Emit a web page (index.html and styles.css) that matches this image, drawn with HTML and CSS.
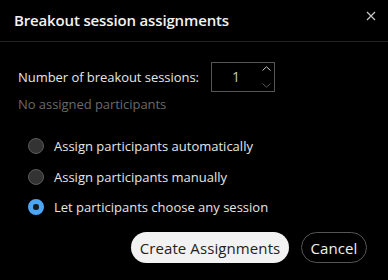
FILE: index.html
```html
<!DOCTYPE html>
<html>
<head>
<meta charset="utf-8">
<link rel="stylesheet" href="styles.css">
</head>
<body>
<div class="dialog">
  <div class="header">
    <div class="title">Breakout session assignments</div>
    <svg class="close" width="10" height="10" viewBox="0 0 10 10"><path d="M1 1L9 9M9 1L1 9" stroke="#c8c8c8" stroke-width="1.2"/></svg>
  </div>
  <div class="content">
    <div class="num-row">
      <span class="label">Number of breakout sessions:</span>
      <div class="num-box">
        <span class="num-val">1</span>
        <div class="spin">
          <svg width="9" height="5" viewBox="0 0 9 5"><path d="M0.5 4.5L4.5 0.8L8.5 4.5" fill="none" stroke="#c8c8c8" stroke-width="1"/></svg>
          <svg width="9" height="5" viewBox="0 0 9 5"><path d="M0.5 0.5L4.5 4.2L8.5 0.5" fill="none" stroke="#555" stroke-width="1"/></svg>
        </div>
      </div>
    </div>
    <div class="hint">No assigned participants</div>
    <div class="radios">
      <div class="radio-row"><span class="radio"></span><span class="rlabel">Assign participants automatically</span></div>
      <div class="radio-row"><span class="radio"></span><span class="rlabel">Assign participants manually</span></div>
      <div class="radio-row"><span class="radio on"></span><span class="rlabel">Let participants choose any session</span></div>
    </div>
  </div>
  <div class="footer">
    <button class="btn primary">Create Assignments</button>
    <button class="btn secondary">Cancel</button>
  </div>
</div>
</body>
</html>
```

FILE: styles.css
```css
html, body {
  margin: 0;
  padding: 0;
  background: #000;
}
.dialog {
  width: 388px;
  height: 280px;
  background: #000;
  font-family: "Open Sans", "Noto Sans", sans-serif;
  color: #e6e6e6;
  display: flex;
  flex-direction: column;
}
.header {
  height: 42px;
  box-sizing: border-box;
  border-bottom: 1px solid #222;
  display: flex;
  align-items: center;
  justify-content: space-between;
  padding: 0 12px 2px 14px;
}
.title {
  font-size: 15px;
  font-weight: 600;
  color: #f2f2f2;
  letter-spacing: -0.15px;
}
.close {
  margin-top: -8px;
}
.content {
  padding: 20px 0 0 18px;
}
.num-row {
  display: flex;
  align-items: center;
  gap: 12px;
}
.label {
  font-size: 13px;
  color: #e6e6e6;
  letter-spacing: -0.05px;
}
.num-box {
  width: 64px;
  height: 30px;
  box-sizing: border-box;
  border: 1px solid #555;
  display: flex;
  align-items: center;
  position: relative;
}
.num-val {
  font-size: 14px;
  color: #c8c8c8;
  margin-left: 20px;
  margin-top: -2px;
}
.spin {
  position: absolute;
  right: 3px;
  top: 3px;
  bottom: 3px;
  display: flex;
  flex-direction: column;
  justify-content: space-between;
}
.hint {
  font-size: 13px;
  color: #6a6a6a;
  margin-top: 3px;
  letter-spacing: -0.05px;
}
.radios {
  padding: 24px 0 0 10px;
  display: flex;
  flex-direction: column;
  gap: 12.5px;
}
.radio-row {
  display: flex;
  align-items: center;
  gap: 10px;
  height: 18px;
}
.radio {
  width: 16px;
  height: 16px;
  box-sizing: border-box;
  border-radius: 50%;
  background: #333;
  border: 1px solid #5a5a5a;
  flex: none;
}
.radio.on {
  background: #4ba6f6;
  border: 5px solid #4ba6f6;
  background-clip: padding-box;
  position: relative;
}
.radio.on::after {
  content: "";
  position: absolute;
  left: 0;
  top: 0;
  width: 6px;
  height: 6px;
  border-radius: 50%;
  background: #1a1a1a;
}
.rlabel {
  font-size: 13px;
  color: #e6e6e6;
  letter-spacing: 0;
}
.footer {
  margin-top: auto;
  padding: 0 21px 17px 0;
  display: flex;
  justify-content: flex-end;
  gap: 12px;
}
.btn {
  height: 31px;
  border-radius: 16px;
  font-family: "Open Sans", "Noto Sans", sans-serif;
  font-size: 15px;
  letter-spacing: 0.1px;
  padding: 0 6px;
  box-sizing: border-box;
}
.primary {
  background: #f2f2f2;
  color: #222;
  border: none;
  width: 158px;
}
.secondary {
  background: #000;
  color: #f0f0f0;
  border: 1px solid #555;
  width: 66px;
}
```
